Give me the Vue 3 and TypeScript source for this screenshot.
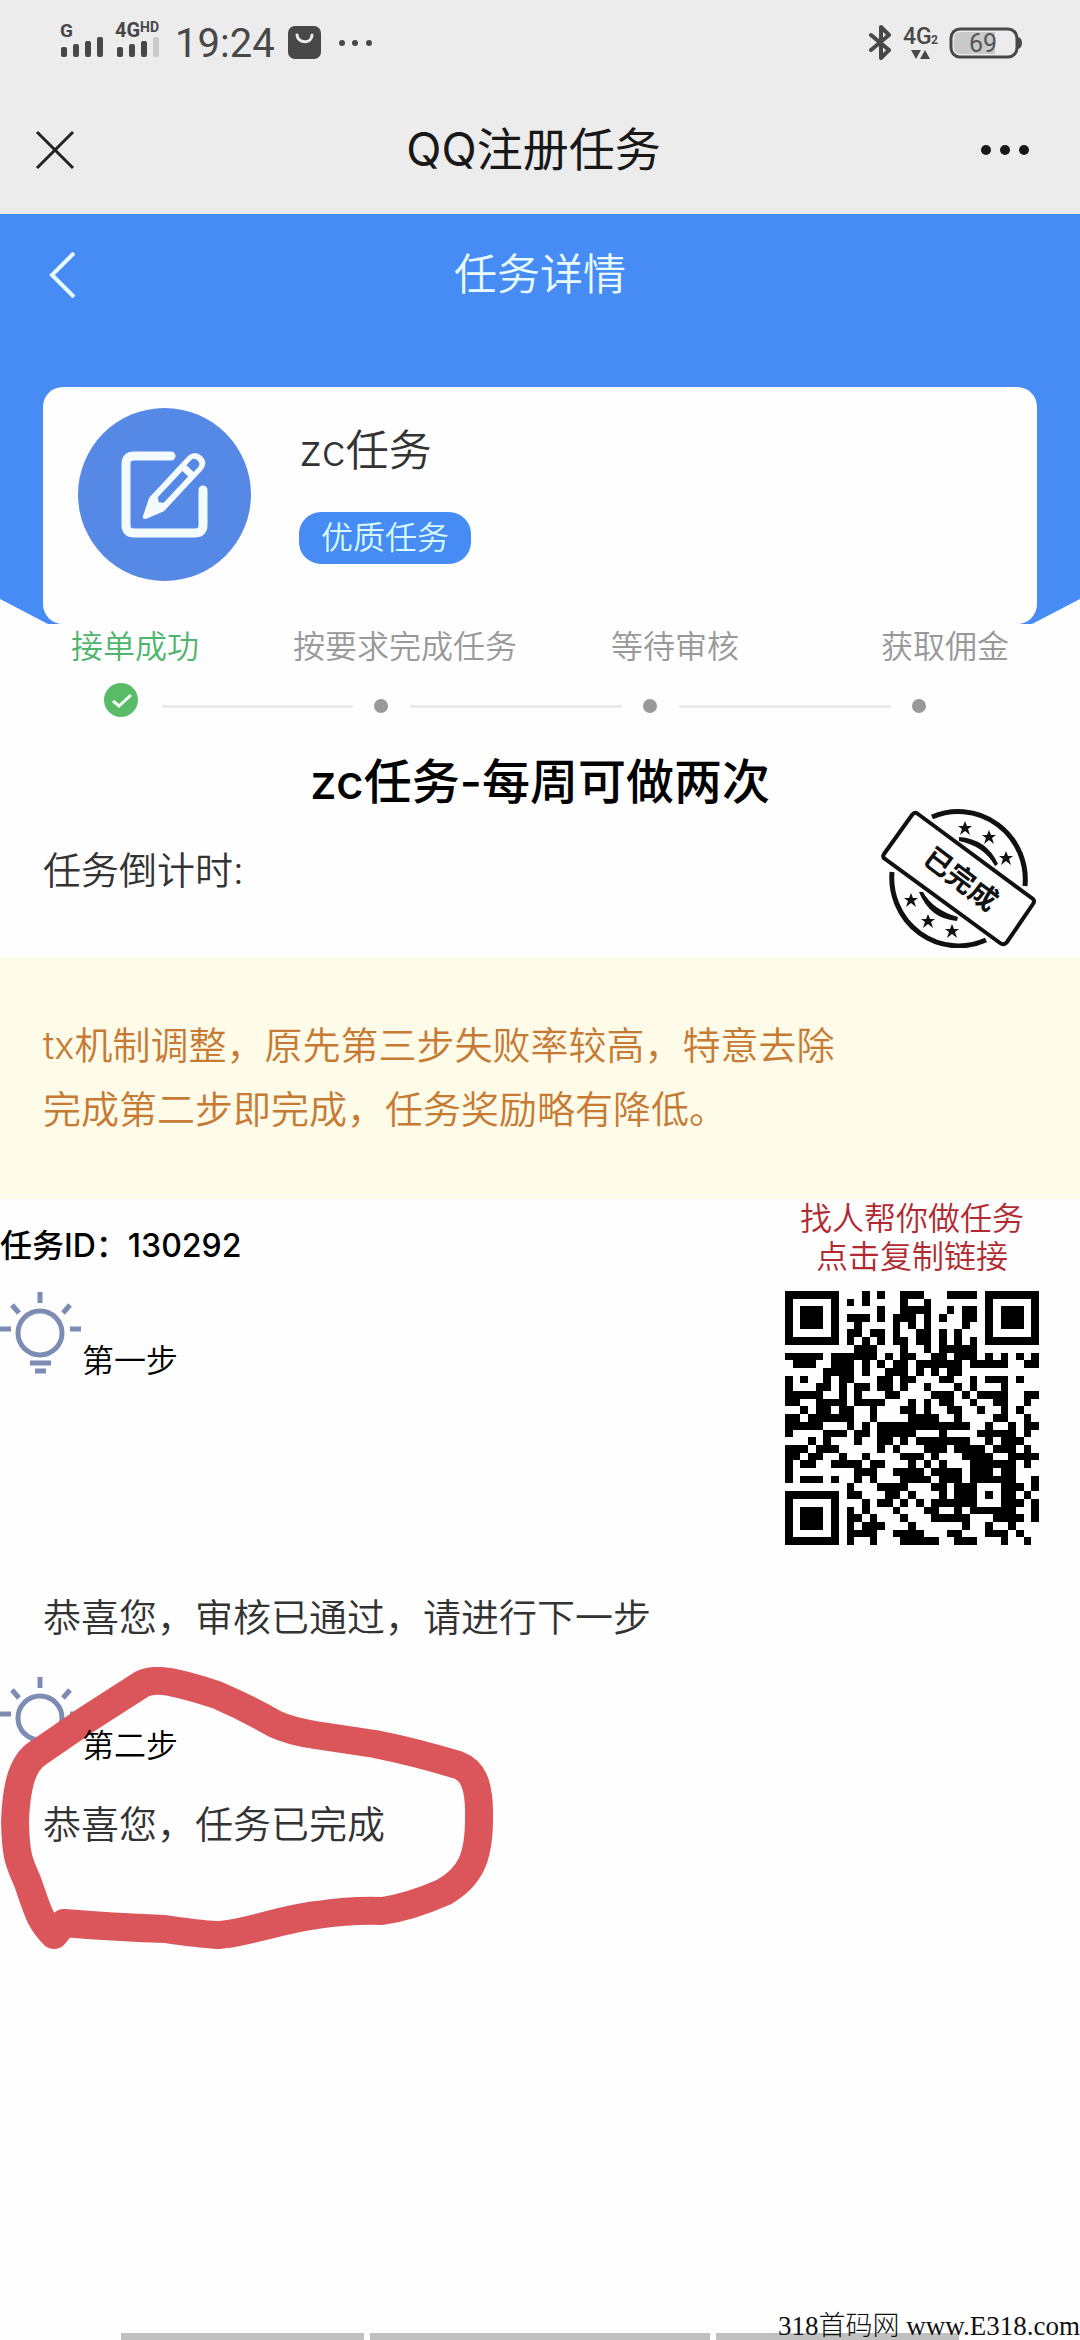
<script setup lang="ts">
interface Step {
  title: string
  done: boolean
}

const steps: Step[] = [
  { title: '接单成功', done: true },
  { title: '按要求完成任务', done: false },
  { title: '等待审核', done: false },
  { title: '获取佣金', done: false },
]

const qrRows: string[] = [
  '#######...#.#..###...####.#######',
  '#.....#.#.#....#..#.......#.....#',
  '#.###.#.....#..####..#.##.#.###.#',
  '#.###.#.###.#.###.#.#..##.#.###.#',
  '#.###.#..#....#.#.#....#..#.###.#',
  '#.....#.##.##.#..##.#.#...#.....#',
  '#######.#.#.#.##.##.#.#.#.#######',
  '.........###...#..#.#####........',
  '#####.######.#.##..##.###.#.#.#.#',
  '.###..###.#.#.##.######.#####..##',
  '.....####.#..###.#.#.##..........',
  '#.#..#.##...##.##...##..#.###.#..',
  '#...##.#.##.##.#..#...#.#...#....',
  '#####..#.#...##....###.#.####..##',
  '##..####.####...#.#.##..#..##..#.',
  '..#.##.##..#...##.#..##..#..#.#..',
  '##.######..#....####..#....##..#.',
  '#####...#.#.############..#..#.##',
  '#....###.##.#####...#....#####.#.',
  '...#.#...#..##.#.#######..#.###..',
  '###.###.....#.#...###.####.###.#.',
  '##.##..#..#....###.#...####..####',
  '#.##..####.##...#.#.#...######.#.',
  '#........###..####.####.###.##...',
  '#.###.#..#.#...####.###.######..#',
  '........#...####...##.###...###.#',
  '#######.##...##.#...#.###.#.##.#.',
  '#.....#...#.##.#.#.######...###.#',
  '#.###.#.#.#...#...##..#.######..#',
  '#.###.#.##.#...#...#####...####.#',
  '#.###.#.#.###...#......#..#..#...',
  '#.....#.####..####...##...###.#..',
  '#######.#..#...#####..###...#..#.',
]

// One closed rectangle for every horizontal run of dark modules
const qrPath = qrRows
  .map((row, y) => [...row.matchAll(/#+/g)].map((m) => `M${m.index} ${y}h${m[0].length}v1h-${m[0].length}z`).join(''))
  .join('')

const stars = [
  [84, 20], [108, 29], [125, 50], [30, 92], [47, 113], [71, 123],
]
</script>

<template>
  <div class="page">
    <div class="status">
      <svg class="signal" width="108" height="48" viewBox="0 -8 108 48">
        <g fill="#484848" font-family="Roboto, sans-serif" font-weight="700">
          <text x="0" y="17" font-size="19">G</text>
          <text x="55" y="17" font-size="20">4G</text>
          <text x="80" y="12" font-size="14">HD</text>
          <rect x="1" y="27" width="6" height="10" rx="2" />
          <rect x="13" y="24" width="6" height="13" rx="2" />
          <rect x="25" y="21" width="6" height="16" rx="2" />
          <rect x="37" y="17" width="6" height="20" rx="2" />
          <rect x="57" y="27" width="6" height="10" rx="2" />
          <rect x="69" y="24" width="6" height="13" rx="2" />
          <rect x="81" y="21" width="6" height="16" rx="2" />
        </g>
        <rect x="93" y="17" width="6" height="20" rx="2" fill="#cacaca" />
      </svg>
      <span class="time">19:24</span>
      <svg class="app" width="34" height="34" viewBox="0 0 34 34">
        <rect x="0" y="0" width="33" height="33" rx="7" fill="#484848" />
        <path d="M9 9C10 18 24 18 24 9" fill="none" stroke="#ececec" stroke-width="3" stroke-linecap="round" />
      </svg>
      <svg width="34" height="8" viewBox="0 0 34 8" fill="#484848">
        <circle cx="4" cy="4" r="3" /><circle cx="17" cy="4" r="3" /><circle cx="31" cy="4" r="3" />
      </svg>
      <svg class="radio" width="72" height="40" viewBox="0 0 72 40">
        <path d="M2 12L20 27L12 35V4L20 12L2 27" fill="none" stroke="#484848" stroke-width="4" stroke-linejoin="round" stroke-linecap="round" />
        <g fill="#484848" font-family="Roboto, sans-serif" font-weight="500">
          <text x="34" y="21" font-size="23">4G</text>
          <text x="62" y="21" font-size="12" font-weight="700">2</text>
          <path d="M42 27h10l-5 9zM51 36h10l-5-9z" />
        </g>
      </svg>
      <svg class="battery" width="74" height="32" viewBox="0 0 74 32">
        <rect x="2" y="2" width="66" height="28" rx="9" fill="none" stroke="#484848" stroke-width="3" />
        <path d="M11 5H46V27H11Q5 27 5 21V11Q5 5 11 5z" fill="#c9c9c9" />
        <path d="M69 10q4 1 4 6t-4 6z" fill="#484848" />
        <text x="34" y="25" font-size="25" text-anchor="middle" fill="#555" font-family="Roboto, sans-serif" font-weight="400">69</text>
      </svg>
    </div>

    <header class="nav">
      <button class="icon-btn close" type="button" aria-label="关闭">
        <svg width="40" height="40" viewBox="0 0 40 40"><path d="M2 2L38 38M38 2L2 38" stroke="#222" stroke-width="3" /></svg>
      </button>
      <span class="nav-title">QQ注册任务</span>
      <button class="icon-btn" type="button" aria-label="更多">
        <svg width="50" height="12" viewBox="0 0 50 12" fill="#181818"><circle cx="6" cy="6" r="5" /><circle cx="25" cy="6" r="5" /><circle cx="44" cy="6" r="5" /></svg>
      </button>
    </header>

    <section class="hero">
      <div class="hero-bar">
        <button class="icon-btn" type="button" aria-label="返回">
          <svg width="28" height="46" viewBox="0 0 28 46"><path d="M26 1L4 23L26 45" fill="none" stroke="#e8fcff" stroke-width="4" /></svg>
        </button>
        <span class="hero-title">任务详情</span>
      </div>
      <div class="card">
        <svg class="avatar" width="173" height="173" viewBox="0 0 173 173">
          <circle cx="86.500" cy="86.500" r="86.500" fill="#5689e6" />
          <path d="M93 48H56Q48 48 48 56V117Q48 125 56 125H117Q125 125 125 117V82" fill="none" stroke="#f4fbff" stroke-width="9" stroke-linecap="round" />
          <g transform="translate(65 111) rotate(-47)">
            <path d="M2-2L20-10H77Q86-9 86 0T77 10H20L2 2Q-1 0 2-2Z" fill="#f4fbff" />
            <path d="M26-4H62V4H26L23 0ZM69-5H75Q80-5 80 0T75 5H69Z" fill="#5689e6" />
          </g>
        </svg>
        <div class="info">
          <div class="task-name">zc任务</div>
          <span class="badge">优质任务</span>
        </div>
      </div>
    </section>

    <section class="steps">
      <div class="labels">
        <span v-for="s in steps" :key="s.title" :class="{ done: s.done }">{{ s.title }}</span>
      </div>
      <div class="track">
        <template v-for="(s, i) in steps" :key="s.title">
          <span v-if="i > 0" class="line" :class="{ first: i === 1 }"></span>
          <span class="marker" :class="{ done: s.done }">
            <svg v-if="s.done" width="34" height="34" viewBox="0 0 34 34">
              <circle cx="17" cy="17" r="17" fill="#5abb66" />
              <path d="M9 18L15 23L27 12" fill="none" stroke="#f4fff4" stroke-width="3" />
            </svg>
            <i v-else class="dot"></i>
          </span>
        </template>
      </div>
    </section>

    <h1>zc任务-每周可做两次</h1>

    <div class="countdown">
      <span>任务倒计时:</span>
      <svg width="156" height="140" viewBox="0 0 156 140">
        <g fill="none" stroke="#111" stroke-width="4">
          <path d="M51 9A67 68 0 0 1 144 78M11 64A67 68 0 0 0 105 132" stroke-width="5" />
          <path d="M37 6L152 91Q154 93 152 96L126 134Q123 138 119 135L4 51Q1 49 3 46L31 7Q34 3 37 6Z" />
        </g>
        <path d="M78 29Q106 31 117 56L114 58Q103 38 78 33ZM38 84L42 84Q52 102 77 109L76 113Q49 111 38 84Z" fill="#111" />
        <path v-for="p in stars" :key="p[0]" :transform="`translate(${p[0]} ${p[1]})`" d="M0-7L2-2L7-2L3 1L5 7L0 3L-5 7L-3 1L-7-2L-2-2Z" fill="#111" />
        <text x="0" y="10" font-size="28" font-weight="700" text-anchor="middle" transform="translate(80 71) rotate(37)" fill="#111">已完成</text>
      </svg>
    </div>

    <div class="notice">tx机制调整，原先第三步失败率较高，特意去除<br />完成第二步即完成，任务奖励略有降低。</div>

    <div class="task">
      <div class="task-main">
        <div class="task-id">任务ID：130292</div>
        <div class="step-head">
          <svg width="82" height="82" viewBox="0 0 82 82" fill="none" stroke="#7d8cb4" stroke-width="5">
            <circle cx="40" cy="41" r="22" /><path d="M40 0V11M0 37H11M70 37H81M12 13L19 21M70 13L63 21M30 71H51M35 79H46" />
          </svg>
          <span>第一步</span>
        </div>
      </div>
      <aside class="share">
        <div>找人帮你做任务</div>
        <a href="#">点击复制链接</a>
        <svg width="254" height="254" viewBox="0 0 33 33" shape-rendering="crispEdges"><path :d="qrPath" fill="#000" /></svg>
      </aside>
    </div>

    <p class="message first-message">恭喜您，审核已通过，请进行下一步</p>

    <div class="marked">
      <svg class="scribble" width="500" height="290" viewBox="0 0 500 290">
        <path d="M64 256Q110 260 165 262Q198 267 217 268C240 268 282 252 317 248Q350 243 382 244Q410 240 444 225C470 210 479 191 479 152C480 114 471 103 458 98Q415 85 375 77L315 68Q290 64 275 57Q245 40 217 28Q190 19 170 15Q152 12 142 17L86 53L38 86C20 97 16 126 15 155C16 194 20 196 28 216C38 245 40 254 54 268L64 256" fill="none" stroke="#da565a" stroke-width="28" stroke-linecap="round" stroke-linejoin="round" />
      </svg>
      <div class="step-head">
        <svg width="82" height="82" viewBox="0 0 82 82" fill="none" stroke="#7d8cb4" stroke-width="5">
          <circle cx="40" cy="41" r="22" /><path d="M40 0V11M0 37H11M70 37H81M12 13L19 21M70 13L63 21M30 71H51M35 79H46" />
        </svg>
        <span>第二步</span>
      </div>
      <p class="message">恭喜您，任务已完成</p>
    </div>

    <footer>
      <div class="home"><i></i><i class="mid"></i><i></i></div>
      <span class="watermark">318首码网 www.E318.com</span>
    </footer>
  </div>
</template>

<style>
body {
  margin: 0;
  background: #fefefe;
}
</style>

<style scoped>
.page {
  display: flex;
  flex-direction: column;
  min-height: 100vh;
  font-family: Inter, "Noto Sans CJK SC", sans-serif;
  font-weight: 350;
  color: #333;
  overflow: hidden;
  position: relative;
}
svg {
  display: block;
  flex: none;
}
.icon-btn {
  padding: 0;
  border: 0;
  background: none;
}
.status {
  display: flex;
  align-items: center;
  height: 86px;
  padding: 0 57px 0 60px;
  background: #ececec;
}
.signal {
  margin-top: -14px;
}
.time {
  margin: 2px 0 0 7px;
  font: 400 40px/48px Roboto, sans-serif;
  color: #484848;
}
.app {
  margin: 0 16px 0 13px;
}
.radio {
  margin-left: auto;
}
.battery {
  margin-left: 8px;
}
.nav {
  display: flex;
  align-items: center;
  justify-content: space-between;
  height: 128px;
  padding: 0 50px 0 35px;
  background: #ececec;
}
.close {
  width: 52px;
}
.nav-title {
  padding-bottom: 2px;
  font-size: 46px;
  line-height: 60px;
  font-weight: 400;
  color: #181818;
}
.hero {
  height: 410px;
  background: #478cf5;
  clip-path: polygon(0 0, 100% 0, 100% 385px, calc(100% - 48px) 100%, 48px 100%, 0 385px);
}
.hero-bar {
  display: grid;
  grid-template-columns: 1fr auto 1fr;
  align-items: center;
  height: 122px;
  padding: 0 48px;
}
.hero-bar .icon-btn {
  justify-self: start;
}
.hero-title {
  padding-bottom: 2px;
  font-size: 43px;
  line-height: 60px;
  color: #e8fcff;
}
.card {
  display: flex;
  margin: 51px 43px 0;
  height: 237px;
  box-sizing: border-box;
  padding: 21px 35px;
  border-radius: 20px;
  background: #fefefe;
}
.info {
  display: flex;
  flex-direction: column;
  align-items: flex-start;
  margin-left: 48px;
}
.task-name {
  margin: 12px 0 32px;
  font-size: 43px;
  line-height: 60px;
}
.badge {
  padding: 0 22px;
  border-radius: 22px;
  font-size: 32px;
  line-height: 52px;
  color: #d8fbff;
  background: #478cf5;
}
.labels {
  display: grid;
  grid-template-columns: repeat(4, 1fr);
  text-align: center;
  font-size: 32px;
  line-height: 46px;
  color: #999;
  white-space: nowrap;
}
.labels .done {
  color: #4eb56c;
}
.track {
  display: flex;
  align-items: center;
  height: 46px;
  margin-top: 13px;
  padding: 0 132px 0 80px;
}
.marker {
  display: flex;
  justify-content: center;
  width: 57px;
}
.marker.done {
  width: 82px;
  padding-bottom: 12px;
}
.dot {
  width: 14px;
  height: 14px;
  border-radius: 50%;
  background: #999;
}
.line {
  flex: 10;
  height: 3px;
  background: #ebebeb;
}
.line.first {
  flex: 9;
}
h1 {
  margin: 27px 0 0;
  text-align: center;
  font-size: 48px;
  font-weight: 500;
  line-height: 52px;
  color: #000;
}
.countdown {
  display: flex;
  justify-content: space-between;
  align-items: flex-start;
  padding: 0 43px 9px;
  font-size: 38px;
  line-height: 44px;
}
.countdown span {
  margin-top: 40px;
}
.notice {
  padding: 56px 43px 58px;
  font-size: 38px;
  line-height: 64px;
  color: #c67a34;
  background: #fefbe8;
}
.task {
  display: flex;
  justify-content: space-between;
}
.task-id {
  margin: 24px 0 23px;
  font-size: 32px;
  font-weight: 500;
  line-height: 46px;
  color: #000;
}
.step-head {
  display: flex;
  align-items: flex-end;
  height: 92px;
  font-size: 32px;
  line-height: 46px;
  color: #000;
}
.step-head svg {
  align-self: flex-start;
}
.step-head span {
  position: relative;
  z-index: 2;
}
.share {
  margin: 1px 41px 0 0;
  text-align: center;
  font-size: 32px;
  line-height: 38px;
  color: #b22a30;
}
.share a {
  color: inherit;
  text-decoration: none;
}
.share svg {
  margin-top: 15px;
}
.message {
  position: relative;
  z-index: 2;
  margin: 27px 43px 0;
  font-size: 38px;
  line-height: 56px;
}
.first-message {
  margin: 44px 43px 32px;
}
.marked {
  position: relative;
}
.scribble {
  position: absolute;
  z-index: 1;
  left: 0;
  top: -10px;
}
footer {
  position: relative;
  margin-top: auto;
}
.home {
  display: flex;
  gap: 6px;
  height: 7px;
  padding: 0 121px;
}
.home i {
  flex: 5;
  background: #c0c0c0;
}
.home .mid {
  flex: 7;
}
.watermark {
  position: absolute;
  right: 0;
  bottom: 0;
  font-family: "Liberation Serif", "Noto Sans CJK SC", serif;
  font-size: 27px;
  font-weight: 300;
  line-height: 28px;
  color: #111;
  white-space: nowrap;
}
</style>
